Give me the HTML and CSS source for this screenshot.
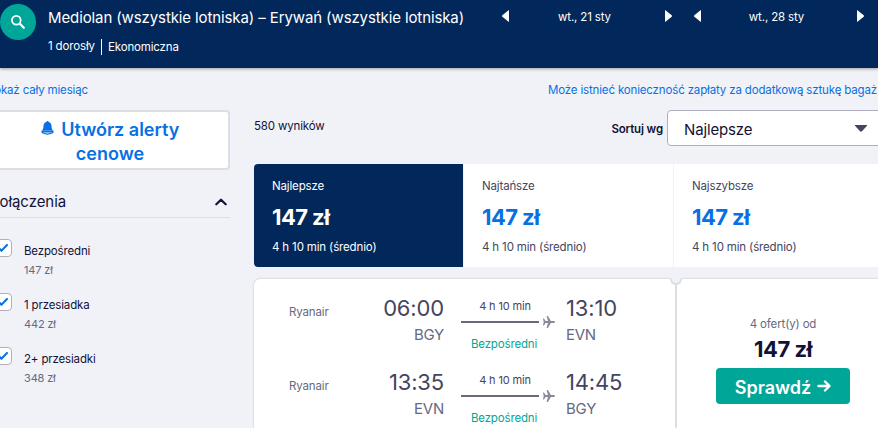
FILE: index.html
```html
<!DOCTYPE html>
<html lang="pl">
<head>
  <meta charset="UTF-8">
  <meta name="viewport" content="width=device-width, initial-scale=1">
  <title>Mediolan – Erywań</title>
  <link rel="stylesheet" href="styles.css">
</head>
<body>
  <header class="header">
    <button class="search-button" aria-label="Szukaj">
      <svg width="16" height="16" viewBox="0 0 16 16" fill="none" stroke="#fff" stroke-linecap="round">
        <circle cx="6.3" cy="6.3" r="4.4" stroke-width="1.7"/>
        <path d="M9.8 9.8l4 4" stroke-width="2.3"/>
      </svg>
    </button>
    <div class="trip">
      <div class="trip-title">Mediolan (wszystkie lotniska) – Erywań (wszystkie lotniska)</div>
      <div class="trip-details"><span class="adults">1 dorosły</span><span class="cabin">Ekonomiczna</span></div>
    </div>
    <nav class="dates">
      <div class="date">
        <svg width="7" height="12" viewBox="0 0 7 12" fill="#fff"><path d="M7 0v12L5.6 11 .3 6.8Q-.3 6 .3 5.2L5.6 1z"/></svg>
        <span>wt., 21 sty</span>
        <svg width="7" height="12" viewBox="0 0 7 12" fill="#fff"><path d="M0 0v12l1.4-1 5.3-4.2q.6-.8 0-1.6L1.4 1z"/></svg>
      </div>
      <div class="date">
        <svg width="7" height="12" viewBox="0 0 7 12" fill="#fff"><path d="M7 0v12L5.6 11 .3 6.8Q-.3 6 .3 5.2L5.6 1z"/></svg>
        <span>wt., 28 sty</span>
        <svg width="7" height="12" viewBox="0 0 7 12" fill="#fff"><path d="M0 0v12l1.4-1 5.3-4.2q.6-.8 0-1.6L1.4 1z"/></svg>
      </div>
    </nav>
  </header>

  <div class="page">
    <div class="links">
      <a href="#" class="month-link">Pokaż cały miesiąc</a>
      <a href="#" class="baggage-link">Może istnieć konieczność zapłaty za dodatkową sztukę bagaż</a>
    </div>

    <aside class="sidebar">
      <button class="alert-button">
        <svg width="13" height="14" viewBox="0 0 13 14" fill="#0770e3"><path d="M6.5 0c.7 0 1 .4 1.1.9C9.6 1.4 10.5 3 10.5 5c0 2.500.6 3.600 1.600 4.600H.9C1.900 8.600 2.500 7.500 2.500 5c0-2 .9-3.600 2.900-4.100C5.500.4 5.800 0 6.500 0z"/><path fill-rule="evenodd" d="M.8 9.600h11.400c.9 1.200.4 2.300-1 3-2.700 1.500-6.700 1.500-9.400 0-1.400-.7-1.900-1.800-1-3zM2 11c1 1.900 8 1.900 9 0-2 .8-7 .8-9 0z"/></svg>
        Utwórz alerty<br>cenowe
      </button>
      <div class="filter-title">
        <span>Połączenia</span>
        <svg width="12" height="8" viewBox="0 0 12 8" fill="none" stroke="#111236" stroke-width="2.200" stroke-linecap="round" stroke-linejoin="round"><path d="M1.300 6.300L6 1.700l4.700 4.600"/></svg>
      </div>
      <label class="filter">
        <span class="checkbox"><svg width="10" height="8" viewBox="0 0 10 8" fill="none" stroke="#0770e3" stroke-width="2" stroke-linecap="round"><path d="M1 4.300L3.500 6.700 9 1"/></svg></span>
        <span class="filter-text"><span class="filter-name">Bezpośredni</span><span class="filter-price">147 zł</span></span>
      </label>
      <label class="filter">
        <span class="checkbox"><svg width="10" height="8" viewBox="0 0 10 8" fill="none" stroke="#0770e3" stroke-width="2" stroke-linecap="round"><path d="M1 4.300L3.500 6.700 9 1"/></svg></span>
        <span class="filter-text"><span class="filter-name">1 przesiadka</span><span class="filter-price">442 zł</span></span>
      </label>
      <label class="filter">
        <span class="checkbox"><svg width="10" height="8" viewBox="0 0 10 8" fill="none" stroke="#0770e3" stroke-width="2" stroke-linecap="round"><path d="M1 4.300L3.500 6.700 9 1"/></svg></span>
        <span class="filter-text"><span class="filter-name">2+ przesiadki</span><span class="filter-price">348 zł</span></span>
      </label>
    </aside>

    <main class="results">
      <div class="toolbar">
        <span class="count">580 wyników</span>
        <span class="sort-label">Sortuj wg</span>
        <div class="select">
          <span>Najlepsze</span>
          <svg width="12" height="7" viewBox="0 0 12 7" fill="#444560"><path d="M0 0h12v.8L7 6.300q-1 .9-2 0L0 .8z"/></svg>
        </div>
      </div>

      <div class="tabs">
        <div class="tab active">
          <span class="tab-name">Najlepsze</span>
          <span class="tab-price">147 zł</span>
          <span class="tab-time">4 h 10 min (średnio)</span>
        </div>
        <div class="tab">
          <span class="tab-name">Najtańsze</span>
          <span class="tab-price">147 zł</span>
          <span class="tab-time">4 h 10 min (średnio)</span>
        </div>
        <div class="tab">
          <span class="tab-name">Najszybsze</span>
          <span class="tab-price">147 zł</span>
          <span class="tab-time">4 h 10 min (średnio)</span>
        </div>
      </div>

      <div class="ticket">
        <div class="legs">
          <div class="leg">
            <span class="airline">Ryanair</span>
            <div class="stop depart"><span class="time">06:00</span><span class="code">BGY</span></div>
            <div class="route">
              <span class="duration">4 h 10 min</span>
              <div class="line"><svg width="12" height="12" viewBox="0 0 12 12" fill="#8b899b"><path d="M0 2.600h1L2.600 5h2.300L3.600 0h1.300L7.900 5h2.700c1.900.4 1.900 1.600 0 2H7.900l-3 5H3.600l1.300-5H2.600L1 9.400H0L.7 6z"/></svg></div>
              <span class="direct">Bezpośredni</span>
            </div>
            <div class="stop"><span class="time">13:10</span><span class="code">EVN</span></div>
          </div>
          <div class="leg">
            <span class="airline">Ryanair</span>
            <div class="stop depart"><span class="time">13:35</span><span class="code">EVN</span></div>
            <div class="route">
              <span class="duration">4 h 10 min</span>
              <div class="line"><svg width="12" height="12" viewBox="0 0 12 12" fill="#8b899b"><path d="M0 2.600h1L2.600 5h2.300L3.600 0h1.300L7.900 5h2.700c1.900.4 1.900 1.600 0 2H7.900l-3 5H3.600l1.300-5H2.600L1 9.400H0L.7 6z"/></svg></div>
              <span class="direct">Bezpośredni</span>
            </div>
            <div class="stop"><span class="time">14:45</span><span class="code">BGY</span></div>
          </div>
        </div>
        <div class="offer">
          <span class="offer-count">4 ofert(y) od</span>
          <span class="offer-price">147 zł</span>
          <button class="offer-button">
            <span>Sprawdź</span>
            <svg width="14" height="12" viewBox="0 0 14 12" fill="none" stroke="#fff" stroke-width="2.400" stroke-linecap="round" stroke-linejoin="round"><path d="M1.500 6h10.800M8 1.500L12.500 6 8 10.500"/></svg>
          </button>
        </div>
      </div>
    </main>
  </div>
</body>
</html>
```

FILE: styles.css
```css
* {
  box-sizing: border-box;
}
body {
  margin: 0;
  height: 428px;
  overflow: hidden;
  background-color: #f1f2f8;
  color: #111236;
  font-family: Inter, "Noto Sans", sans-serif;
  font-size: 11.5px;
  line-height: 16px;
  letter-spacing: -0.15px;
}
button {
  border: none;
  padding: 0;
  font-family: inherit;
}
span {
  white-space: nowrap;
}
svg {
  flex: none;
}
a {
  color: #0770e3;
  text-decoration: none;
  white-space: nowrap;
}

/* header */
.header {
  display: flex;
  align-items: flex-start;
  height: 68px;
  background-color: #02275a;
  color: #fff;
  box-shadow: 0 1px 3px rgba(0, 0, 0, 0.35);
}
.search-button {
  display: flex;
  align-items: center;
  justify-content: center;
  width: 36px;
  height: 36px;
  margin-top: 4px;
  border-radius: 50%;
  background-color: #00a698;
}
.trip {
  width: 454px;
  padding: 8px 0 0 12px;
}
.trip-title {
  font-size: 15px;
  line-height: 20px;
  letter-spacing: -0.11px;
}
.trip-details {
  display: flex;
  margin-top: 11px;
}
.adults {
  width: 54px;
  line-height: 14px;
  border-right: 1px solid #fff;
}
.cabin {
  padding-left: 6px;
}
.dates {
  display: flex;
  gap: 22px;
  padding: 9px 0 0;
  margin-left: 12px;
}
.date {
  display: flex;
  align-items: center;
  justify-content: space-between;
  width: 170px;
}
.date span {
  padding-right: 5px;
}
.date svg {
  margin-bottom: 2px;
}

/* page */
.page {
  display: grid;
  grid-template-columns: 240px 630px;
  column-gap: 24px;
  width: 894px;
  margin-left: -10px;
}
.links {
  grid-column: 1 / 3;
  display: flex;
  justify-content: space-between;
  height: 42px;
  padding: 14px 7px 0 0;
}
.month-link {
  margin-left: -3px;
}

/* sidebar */
.alert-button {
  width: 240px;
  height: 60px;
  padding-top: 3px;
  border: 2px solid #dddde5;
  border-radius: 4px;
  background-color: #fff;
  color: #0770e3;
  font-size: 18px;
  font-weight: 600;
  line-height: 24px;
}
.alert-button svg {
  margin: 0 3px 1px 0;
}
.filter-title {
  display: flex;
  align-items: center;
  justify-content: space-between;
  height: 32px;
  margin: 16px 0 21px;
  padding-right: 3px;
  border-bottom: 1px solid #dddde5;
  font-size: 15px;
  letter-spacing: -0.05px;
}
.filter {
  display: flex;
  height: 54px;
  padding-left: 4px;
}
.checkbox {
  display: flex;
  align-items: center;
  justify-content: center;
  width: 18px;
  height: 18px;
  border: 1px solid #b2aebd;
  border-radius: 4px;
  background-color: #fff;
}
.filter-text {
  display: flex;
  flex-direction: column;
  gap: 3px;
  padding: 4px 0 0 12px;
}
.filter-price {
  color: #68697f;
  font-size: 11px;
}

/* results */
.toolbar {
  display: flex;
  align-items: center;
  height: 36px;
}
.count {
  flex: 1;
  margin-bottom: 4px;
}
.sort-label {
  margin: 2px 4px 0 0;
  font-weight: 600;
}
.select {
  display: flex;
  align-items: center;
  justify-content: space-between;
  width: 217px;
  height: 36px;
  padding: 3px 16px 0;
  border: 1px solid #b2aebd;
  border-radius: 4px;
  background-color: #fff;
  font-size: 15px;
}
.select svg {
  margin-bottom: 3px;
}
.tabs {
  display: grid;
  grid-template-columns: repeat(3, 210px);
  height: 103px;
  margin-top: 18px;
  border-radius: 4px;
  background-color: #fff;
  overflow: hidden;
}
.tab {
  display: flex;
  flex-direction: column;
  padding: 14px 18px;
  border-right: 1px solid #f1f2f8;
  color: #444560;
}
.tab.active {
  background-color: #02275a;
  color: #fff;
}
.tab-price {
  margin: 11px 0 10px;
  color: #0770e3;
  font-size: 22px;
  font-weight: 700;
  line-height: 24px;
  letter-spacing: -0.6px;
}
.active .tab-price {
  color: #fff;
}

/* ticket */
.ticket {
  display: grid;
  grid-template-columns: 421px 1fr;
  height: 149px;
  margin-top: 12px;
}
.legs,
.offer {
  border-radius: 6px 6px 0 0;
  background-color: #fff;
  box-shadow: 0 0 2px rgba(37, 32, 31, 0.3);
}
.legs {
  position: relative;
  padding-top: 16px;
}
/* ticket notch */
.legs::after {
  content: "";
  box-sizing: border-box;
  position: absolute;
  z-index: 1;
  top: 0;
  right: -7px;
  width: 12px;
  height: 6px;
  border: 2px solid #dddde5;
  border-top: none;
  border-radius: 0 0 6px 6px;
  background-color: #f1f2f8;
}
.leg {
  display: grid;
  grid-template-columns: 66px 89px 94px 80px;
  height: 74px;
  padding-left: 35px;
}
.leg:last-child {
  height: 59px;
}
.airline {
  margin-top: 9px;
  color: #68697f;
}
.stop {
  display: flex;
  flex-direction: column;
  padding-left: 28px;
}
.depart {
  align-items: flex-end;
  padding-left: 0;
}
.time {
  color: #444560;
  font-size: 22px;
  line-height: 27px;
}
.code {
  color: #68697f;
  font-size: 15px;
  line-height: 26px;
  letter-spacing: -0.25px;
}
.route {
  display: flex;
  flex-direction: column;
  padding-left: 17px;
  color: #444560;
}
.duration,
.direct {
  width: 86px;
  text-align: center;
}
.duration {
  width: 88px;
  margin-top: 3px;
  font-size: 11px;
}
.line {
  display: flex;
  align-items: center;
  gap: 4px;
  width: 94px;
  margin: 2px 0 8px;
}
.line::before {
  content: "";
  width: 78px;
  height: 2px;
  background-color: #68697f;
}
.direct {
  color: #00a698;
}
.offer {
  display: flex;
  flex-direction: column;
  align-items: center;
  margin-left: 2px;
  padding: 37px 0 0 5px;
}
.offer-count {
  color: #68697f;
}
.offer-price {
  margin: 5px 0 7px;
  font-size: 22px;
  font-weight: 700;
  line-height: 24px;
  letter-spacing: -0.5px;
}
.offer-button {
  display: flex;
  align-items: center;
  justify-content: center;
  gap: 6px;
  width: 134px;
  height: 36px;
  border-radius: 4px;
  background-color: #00a698;
  color: #fff;
  font-size: 18px;
  font-weight: 600;
}
.offer-button span {
  padding-top: 2px;
}
```
